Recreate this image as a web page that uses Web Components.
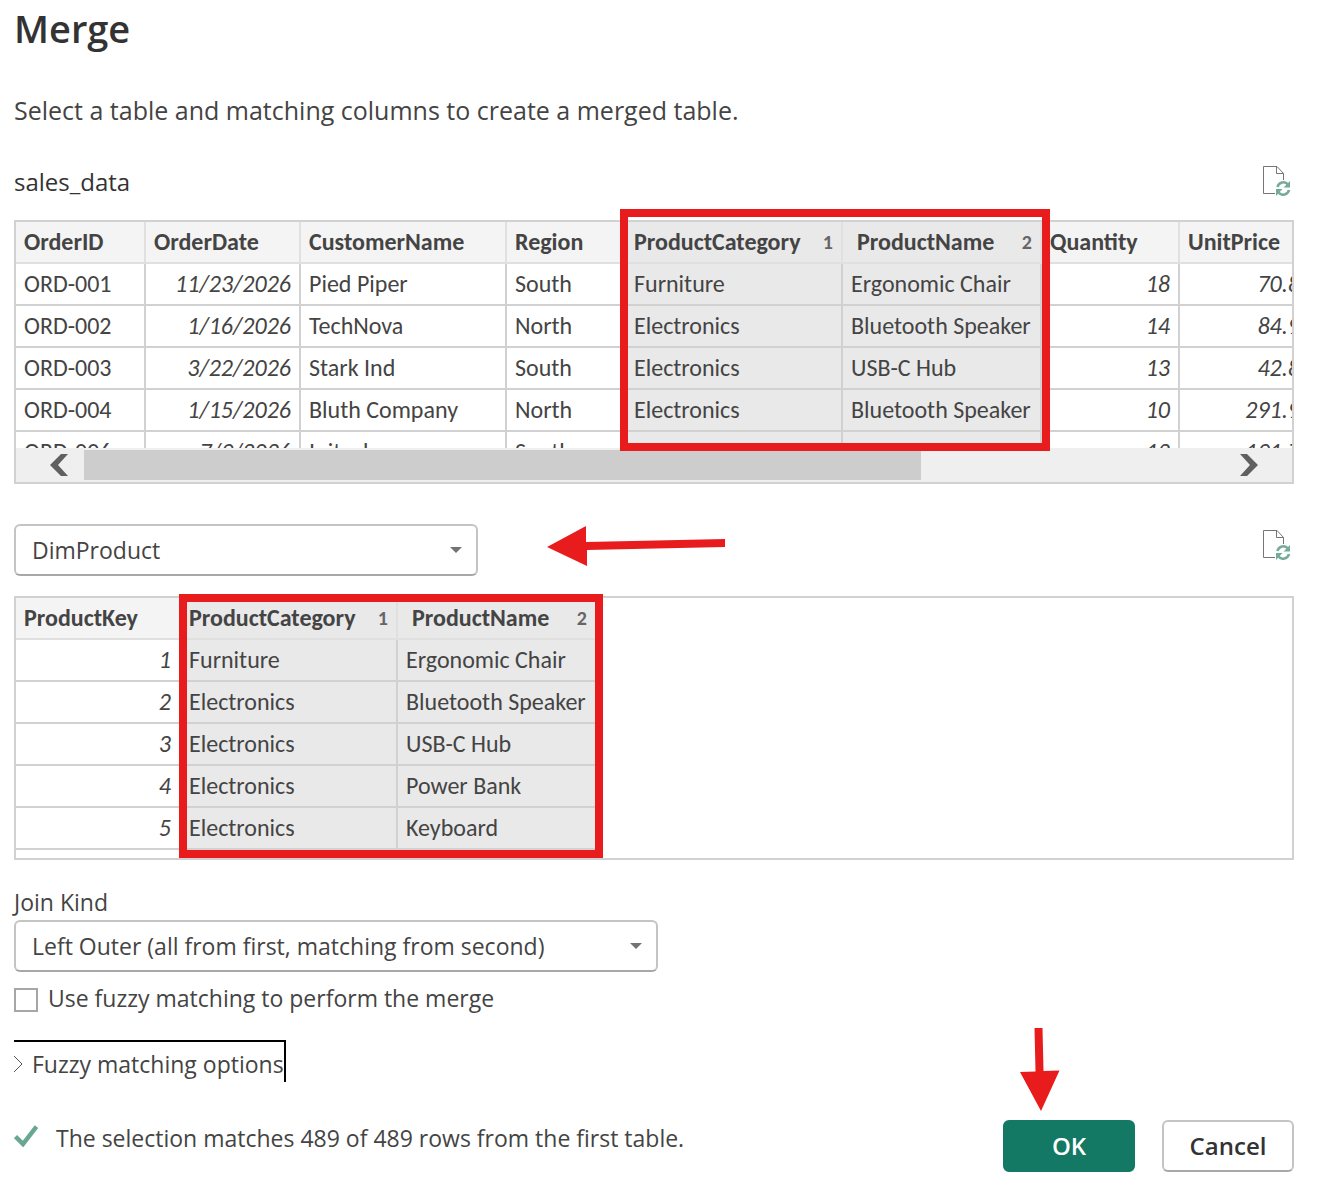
<!DOCTYPE html>
<html lang="en">
<head>
<meta charset="UTF-8">
<meta name="viewport" content="width=device-width, initial-scale=1.0">
<title>Merge</title>
<style>
    body {
        margin: 0;
        background: #ffffff;
        color: #444444;
        font-family: 'Segoe UI', 'Open Sans', 'Noto Sans', sans-serif;
        font-size: 23px;
        line-height: 36px;
    }
</style>
</head>
<body>
<merge-dialog></merge-dialog>

<script>
const SALES = {
    columns: [
        { name: 'OrderID', width: 130 },
        { name: 'OrderDate', width: 155, numeric: true },
        { name: 'CustomerName', width: 206 },
        { name: 'Region', width: 119 },
        { name: 'ProductCategory', width: 217, order: 1 },
        { name: 'ProductName', width: 199, order: 2 },
        { name: 'Quantity', width: 138, numeric: true },
        { name: 'UnitPrice', width: 130, numeric: true }
    ],
    rows: [
        ['ORD-001', '11/23/2026', 'Pied Piper', 'South', 'Furniture', 'Ergonomic Chair', '18', '70.8'],
        ['ORD-002', '1/16/2026', 'TechNova', 'North', 'Electronics', 'Bluetooth Speaker', '14', '84.9'],
        ['ORD-003', '3/22/2026', 'Stark Ind', 'South', 'Electronics', 'USB-C Hub', '13', '42.8'],
        ['ORD-004', '1/15/2026', 'Bluth Company', 'North', 'Electronics', 'Bluetooth Speaker', '10', '291.9'],
        ['ORD-006', '7/9/2026', 'Initech', 'South', '', '', '12', '191.7']
    ]
};

const PRODUCTS = {
    columns: [
        { name: 'ProductKey', width: 165, numeric: true },
        { name: 'ProductCategory', width: 217, order: 1 },
        { name: 'ProductName', width: 199, order: 2 }
    ],
    rows: [
        ['1', 'Furniture', 'Ergonomic Chair'],
        ['2', 'Electronics', 'Bluetooth Speaker'],
        ['3', 'Electronics', 'USB-C Hub'],
        ['4', 'Electronics', 'Power Bank'],
        ['5', 'Electronics', 'Keyboard'],
        ['', '', '']
    ]
};

const SOURCES = { sales_data: SALES, DimProduct: PRODUCTS };

// Table preview with an optional horizontal scrollbar under it
class TablePreview extends HTMLElement {
    connectedCallback() {
        this.attachShadow({ mode: 'open' });
        this.render();
    }

    render() {
        const { columns, rows } = SOURCES[this.getAttribute('source')];
        const cellClass = (col) => [col.numeric ? 'num' : '', col.order ? 'selected' : ''].join(' ').trim();
        const total = columns.reduce((sum, col) => sum + col.width, 0);

        this.shadowRoot.innerHTML = `
            <style>
                :host {
                    display: block;
                    position: relative;
                }

                .box {
                    display: flex;
                    flex-direction: column;
                    box-sizing: border-box;
                    height: 264px;
                    border: 2px solid #d1d1d1;
                }

                .view {
                    flex: 1;
                    min-height: 0;
                    overflow: hidden;
                }

                table {
                    table-layout: fixed;
                    width: ${total}px;
                    border-collapse: separate;
                    border-spacing: 0;
                    font-family: Calibri, Carlito, Lato, sans-serif;
                    font-size: 24px;
                    line-height: 40px;
                }

                th, td {
                    box-sizing: border-box;
                    height: 42px;
                    padding: 0 8px;
                    border-right: 2px solid #d1d1d1;
                    border-bottom: 2px solid #d1d1d1;
                    text-align: left;
                    white-space: nowrap;
                }

                th {
                    background: #f4f4f4;
                    border-color: #e0e0e0;
                    font-weight: 700;
                }

                .num {
                    text-align: right;
                    font-style: italic;
                }

                th.num {
                    text-align: left;
                    font-style: normal;
                }

                .selected {
                    background: #e9e9e9;
                }

                .head {
                    display: flex;
                    justify-content: space-between;
                }

                /* headers after the first key column sit further in */
                .selected + .selected .head {
                    padding-left: 6px;
                }

                .order {
                    color: #666666;
                    font-size: 20px;
                }

                .scroll {
                    display: flex;
                    align-items: stretch;
                    height: 34px;
                    background: #efefef;
                }

                .scroll button {
                    width: 68px;
                    padding: 0 34px 0 0;
                    border: 0;
                    background: none;
                }

                .scroll button.left {
                    padding: 0 16px 0 0;
                }

                .scroll svg {
                    display: block;
                    margin-left: auto;
                }

                .track {
                    flex: 1;
                    padding: 2px 0;
                }

                .thumb {
                    width: 73.4%;
                    height: 30px;
                    background: #cdcdcd;
                }
            </style>
            <div class="box">
                <div class="view">
                    <table>
                        <colgroup>${columns.map((col) => `<col style="width: ${col.width}px">`).join('')}</colgroup>
                        <thead>
                            <tr>${columns.map((col) => `
                                <th scope="col" class="${cellClass(col)}">
                                    <div class="head">
                                        <span>${col.name}</span>
                                        ${col.order ? `<span class="order">${col.order}</span>` : ''}
                                    </div>
                                </th>`).join('')}
                            </tr>
                        </thead>
                        <tbody>${rows.map((row) => `
                            <tr>${row.map((text, i) => `<td class="${cellClass(columns[i])}">${text}</td>`).join('')}</tr>`).join('')}
                        </tbody>
                    </table>
                </div>
                ${this.hasAttribute('scrollable') ? `
                <div class="scroll">
                    <button class="left" type="button" aria-label="Scroll left">
                        <svg width="18" height="22" viewBox="0 0 18 22"><path d="M11 0h7L8 11l10 11h-7L0 11z" fill="#606060"/></svg>
                    </button>
                    <div class="track"><div class="thumb"></div></div>
                    <button type="button" aria-label="Scroll right">
                        <svg width="18" height="22" viewBox="0 0 18 22"><path d="M7 0H0l10 11L0 22h7l11-11z" fill="#606060"/></svg>
                    </button>
                </div>` : ''}
            </div>
            <slot></slot>
        `;
    }
}

// Red frame drawn over the selected columns of a preview
class MarkFrame extends HTMLElement {
    connectedCallback() {
        this.attachShadow({ mode: 'open' });
        this.shadowRoot.innerHTML = `
            <style>
                :host {
                    display: block;
                    position: absolute;
                    box-sizing: border-box;
                    border: 8px solid #e81c1c;
                    pointer-events: none;
                }
            </style>
        `;
    }
}

class MarkArrow extends HTMLElement {
    connectedCallback() {
        const down = this.getAttribute('direction') === 'down';
        this.attachShadow({ mode: 'open' });
        this.shadowRoot.innerHTML = `
            <style>
                :host {
                    display: block;
                    pointer-events: none;
                }

                svg {
                    display: block;
                    fill: #e81c1c;
                }
            </style>
            ${down
                ? '<svg width="40" height="84" viewBox="0 0 40 84"><path d="M14.500 0h8l1 43 16-.5L21 83 0 44l15.500-.5z"/></svg>'
                : '<svg width="178" height="40" viewBox="0 0 178 40"><path d="M0 21 39 0v16l139-3v8L40 24v16z"/></svg>'}
        `;
    }
}

class RefreshButton extends HTMLElement {
    connectedCallback() {
        this.attachShadow({ mode: 'open' });
        this.shadowRoot.innerHTML = `
            <style>
                :host {
                    display: block;
                }

                button {
                    display: block;
                    padding: 0;
                    border: 0;
                    background: none;
                }

                svg {
                    display: block;
                }
            </style>
            <button type="button" aria-label="Refresh preview">
                <svg width="28" height="30" viewBox="0 0 28 30">
                    <path d="M12 27.500H.5V.5h13.500L20.500 7.500V14M13.500.5v7h7" fill="none" stroke="#757575"/>
                    <g fill="none" stroke="#76ab98" stroke-width="2.600">
                        <path d="M14.500 21a6 6 0 0 1 10.500-2.500"/>
                        <path d="M26 24a6 6 0 0 1-10.500 2.500"/>
                    </g>
                    <path d="M27 15v6.500h-6.500zM13 30v-7h6.500z" fill="#76ab98"/>
                </svg>
            </button>
        `;
    }
}

class SelectField extends HTMLElement {
    connectedCallback() {
        const label = this.getAttribute('label');
        const value = this.getAttribute('value');
        this.attachShadow({ mode: 'open' });
        this.shadowRoot.innerHTML = `
            <style>
                :host {
                    display: block;
                }

                label {
                    display: block;
                }

                .field {
                    display: grid;
                    align-items: center;
                }

                .field > * {
                    grid-area: 1 / 1;
                }

                select {
                    appearance: none;
                    box-sizing: border-box;
                    width: 100%;
                    height: 52px;
                    margin: 0;
                    padding: 0 48px 0 16px;
                    border: 2px solid #c4c4c4;
                    border-bottom-color: #a8a8a8;
                    border-radius: 6px;
                    background: #ffffff;
                    color: inherit;
                    font: inherit;
                }

                svg {
                    justify-self: end;
                    margin-right: 16px;
                    pointer-events: none;
                }
            </style>
            ${this.hasAttribute('show-label') ? `<label for="select">${label}</label>` : ''}
            <div class="field">
                <select id="select" aria-label="${label}"><option>${value}</option></select>
                <svg width="12" height="6" viewBox="0 0 12 6"><path d="M0 0h12L6 6z" fill="#737373"/></svg>
            </div>
        `;
    }
}

class CheckField extends HTMLElement {
    connectedCallback() {
        this.attachShadow({ mode: 'open' });
        this.shadowRoot.innerHTML = `
            <style>
                :host {
                    display: block;
                }

                label {
                    display: flex;
                    align-items: flex-end;
                    gap: 10px;
                }

                input {
                    appearance: none;
                    box-sizing: border-box;
                    width: 24px;
                    height: 24px;
                    margin: 0 0 4px;
                    border: 2px solid #a6a6a6;
                    background: #ffffff;
                }
            </style>
            <label><input type="checkbox"><span><slot></slot></span></label>
        `;
    }
}

class DialogButton extends HTMLElement {
    connectedCallback() {
        this.attachShadow({ mode: 'open' });
        this.shadowRoot.innerHTML = `
            <style>
                :host {
                    display: block;
                }

                button {
                    box-sizing: border-box;
                    width: 132px;
                    height: 52px;
                    padding: 0;
                    border: 2px solid #c4c4c4;
                    border-bottom-color: #a8a8a8;
                    border-radius: 6px;
                    background: #ffffff;
                    color: #333333;
                    font: inherit;
                    font-weight: 600;
                    font-size: 24px;
                }

                :host([primary]) button {
                    border-color: #137864;
                    background: #137864;
                    color: #ffffff;
                }
            </style>
            <button type="button"><slot></slot></button>
        `;
    }
}

class MergeDialog extends HTMLElement {
    connectedCallback() {
        this.attachShadow({ mode: 'open' });
        this.render();
        this.setupEventListeners();
    }

    render() {
        this.shadowRoot.innerHTML = `
            <style>
                :host {
                    display: block;
                    padding: 0 48px 12px 14px;
                }

                h1 {
                    margin: 0 0 36px;
                    color: #333333;
                    font-size: 38px;
                    font-weight: 600;
                    line-height: 56px;
                }

                p {
                    margin: 0;
                }

                .intro {
                    margin-bottom: 36px;
                    font-size: 25px;
                }

                .bar {
                    display: flex;
                    justify-content: space-between;
                    align-items: flex-start;
                    margin-bottom: 20px;
                }

                .bar h2 {
                    margin: 0;
                    color: #333333;
                    font-size: 24px;
                    font-weight: 400;
                }

                .bar refresh-button {
                    padding: 2px 3px 0 0;
                }

                .picker {
                    display: flex;
                    gap: 69px;
                }

                .picker select-field {
                    width: 464px;
                }

                .picker mark-arrow {
                    padding-top: 2px;
                }

                .bar.second {
                    margin-top: 40px;
                }

                .bar.second refresh-button {
                    padding-top: 6px;
                }

                .sales-frame {
                    left: 606px;
                    top: -11px;
                    width: 430px;
                    height: 242px;
                }

                .product-frame {
                    left: 165px;
                    top: -2px;
                    width: 424px;
                    height: 264px;
                }

                .join {
                    width: 644px;
                    margin: 24px 0 8px;
                }

                .options {
                    display: flex;
                    align-items: center;
                    gap: 8px;
                    height: 42px;
                    margin: 24px 0 38px;
                    padding: 4px 0 0;
                    border: solid #000000;
                    border-width: 2px 2px 0 0;
                    background: none;
                    color: inherit;
                    font: inherit;
                }

                footer {
                    display: flex;
                    justify-content: space-between;
                    align-items: flex-start;
                }

                .status {
                    display: flex;
                    align-items: center;
                    gap: 18px;
                }

                .status svg {
                    margin-bottom: 4px;
                }

                .actions {
                    display: flex;
                    gap: 27px;
                    position: relative;
                }

                .actions mark-arrow {
                    position: absolute;
                    left: 17px;
                    bottom: 60px;
                }
            </style>
            <h1>Merge</h1>
            <p class="intro">Select a table and matching columns to create a merged table.</p>

            <div class="bar">
                <h2>sales_data</h2>
                <refresh-button></refresh-button>
            </div>
            <table-preview source="sales_data" scrollable>
                <mark-frame class="sales-frame"></mark-frame>
            </table-preview>

            <div class="bar second">
                <div class="picker">
                    <select-field label="Table to merge" value="DimProduct"></select-field>
                    <mark-arrow direction="left"></mark-arrow>
                </div>
                <refresh-button></refresh-button>
            </div>
            <table-preview source="DimProduct">
                <mark-frame class="product-frame"></mark-frame>
            </table-preview>

            <select-field class="join" label="Join Kind" show-label value="Left Outer (all from first, matching from second)"></select-field>
            <check-field>Use fuzzy matching to perform the merge</check-field>

            <button class="options" type="button" aria-expanded="false">
                <svg width="10" height="18" viewBox="0 0 10 18"><path d="M0 1l8 8-8 8" fill="none" stroke="#555555"/></svg>
                <span>Fuzzy matching options</span>
            </button>

            <footer>
                <p class="status">
                    <svg width="24" height="22" viewBox="0 0 24 22"><path d="M1.500 11.500 9 19 22.500 1.500" fill="none" stroke="#69a792" stroke-width="4.500"/></svg>
                    <span>The selection matches 489 of 489 rows from the first table.</span>
                </p>
                <div class="actions">
                    <dialog-button primary>OK</dialog-button>
                    <dialog-button>Cancel</dialog-button>
                    <mark-arrow direction="down"></mark-arrow>
                </div>
            </footer>
        `;
    }

    setupEventListeners() {
        const options = this.shadowRoot.querySelector('.options');

        options.addEventListener('click', () => {
            const open = options.getAttribute('aria-expanded') === 'true';
            options.setAttribute('aria-expanded', String(!open));
        });
    }
}

customElements.define('table-preview', TablePreview);
customElements.define('mark-frame', MarkFrame);
customElements.define('mark-arrow', MarkArrow);
customElements.define('refresh-button', RefreshButton);
customElements.define('select-field', SelectField);
customElements.define('check-field', CheckField);
customElements.define('dialog-button', DialogButton);
customElements.define('merge-dialog', MergeDialog);
</script>
</body>
</html>
